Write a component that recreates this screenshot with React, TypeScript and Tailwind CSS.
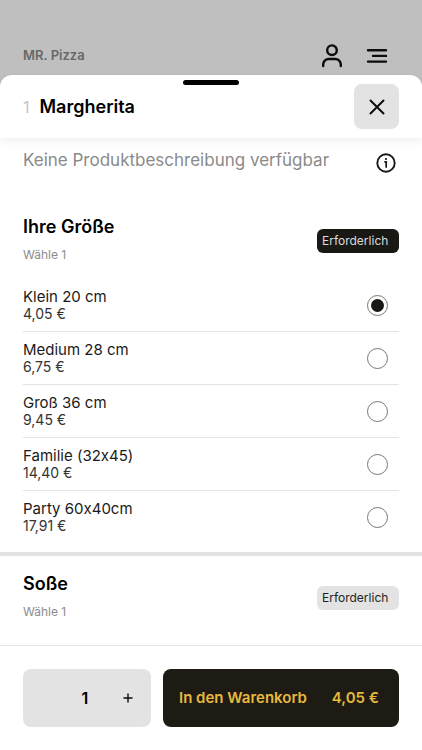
import { useState } from 'react';

const sizes = [
  { name: 'Klein 20 cm', price: '4,05 €' },
  { name: 'Medium 28 cm', price: '6,75 €' },
  { name: 'Groß 36 cm', price: '9,45 €' },
  { name: 'Familie (32x45)', price: '14,40 €' },
  { name: 'Party 60x40cm', price: '17,91 €' },
];

function GroupHeader({ title, active }: { title: string; active?: boolean }) {
  return (
    <div className="flex items-center justify-between">
      <div>
        <h2 className="text-[18px] leading-6 font-semibold text-black">{title}</h2>
        <p className="mt-1 text-[12px] leading-6 text-[#8c8c8c]">Wähle 1</p>
      </div>
      <span
        className={`h-6 w-[82px] rounded-md pl-[5px] text-[12px] leading-6 ${
          active ? 'bg-[#1a1814] text-[#dcdcdc]' : 'bg-[#e3e3e3] text-[#222222]'
        }`}
      >
        Erforderlich
      </span>
    </div>
  );
}

export default function App() {
  const [selected, setSelected] = useState(0);
  const [count, setCount] = useState(1);

  return (
    <div className="flex min-h-screen flex-col bg-[#bfbfbf] font-['Inter',sans-serif] text-[#1a1a1a] [font-feature-settings:'calt'_0]">
      {/* Shop bar behind the sheet */}
      <header className="flex h-[75px] items-end justify-between px-[23px] pb-1">
        <span className="pb-[6px] text-[13px] leading-5 font-semibold text-[#686868]">MR. Pizza</span>
        <div className="flex items-center gap-[22px] pr-[11px]">
          <button type="button" aria-label="Konto">
            <svg width="24" height="28" viewBox="0 0 24 28" fill="none" stroke="#0c0c0c" strokeWidth="2.4" strokeLinecap="round">
              <circle cx="12" cy="7.2" r="4.8" />
              <path d="M3.200 23v-1.500a5.500 5.500 0 0 1 5.500-5.500h6.600a5.500 5.500 0 0 1 5.500 5.500v1.500" />
            </svg>
          </button>
          <button type="button" aria-label="Menü">
            <svg width="22" height="28" viewBox="0 0 22 28" fill="none" stroke="#0c0c0c" strokeWidth="2.4" strokeLinecap="round">
              <path d="M2 7.2h18M7 12.900h13M2 18.600h18" />
            </svg>
          </button>
        </div>
      </header>

      <main className="flex flex-1 flex-col rounded-t-xl bg-white">
        <div className="relative flex items-center justify-between rounded-t-xl px-[23px] py-[9px] shadow-[0_4px_10px_rgba(0,0,0,0.06)]">
          <div className="absolute top-[5px] left-1/2 h-[5px] w-14 -translate-x-1/2 rounded-full bg-black" />
          <h1 className="flex items-center gap-[10px] text-[18px] leading-6 font-semibold text-black">
            <span className="text-[16px] font-normal text-[#c4c4c4]">1</span>
            Margherita
          </h1>
          <button
            type="button"
            aria-label="Schließen"
            className="flex size-[45px] items-center justify-center rounded-lg bg-[#e3e3e3]"
          >
            <svg width="18" height="18" viewBox="0 0 18 18" fill="none" stroke="#0c0c0c" strokeWidth="2" strokeLinecap="round">
              <path d="M2.5 2.5l13 13M15.5 2.5l-13 13" />
            </svg>
          </button>
        </div>

        <div className="flex items-start justify-between px-[23px] pt-[10px]">
          <p className="text-[17px] leading-6 text-[#8a8a8a]">Keine Produktbeschreibung verfügbar</p>
          <button type="button" aria-label="Produktinformationen" className="mt-[5px] mr-[3px]">
            <svg width="20" height="20" viewBox="0 0 20 20" fill="none" stroke="#1a1814" strokeWidth="1.9" strokeLinecap="round">
              <circle cx="10" cy="10" r="8.7" />
              <path d="M9 8.9h1.200v5.200" strokeWidth="1.700" />
              <circle cx="10" cy="6" r="1.1" fill="#1a1814" stroke="none" />
            </svg>
          </button>
        </div>

        <section className="border-b-4 border-[#e3e3e3] px-[23px] pt-[42px] pb-[9px]">
          <GroupHeader title="Ihre Größe" active />
          <div className="mt-3">
            {sizes.map((size, i) => (
              <label
                key={size.name}
                className="flex items-center justify-between border-b border-[#e3e3e3] py-[9px] last:border-b-0"
              >
                <span>
                  <span className="block text-[15px] leading-[18px]">{size.name}</span>
                  <span className="block text-[14px] leading-4 text-[#333333]">{size.price}</span>
                </span>
                <input
                  type="radio"
                  name="size"
                  checked={selected === i}
                  onChange={() => setSelected(i)}
                  className="mr-[11px] flex size-[21px] appearance-none items-center justify-center rounded-full border border-[#777777] before:size-[13px] before:rounded-full checked:before:bg-[#1a1814]"
                />
              </label>
            ))}
          </div>
        </section>

        <section className="px-[23px] pt-4 pb-4">
          <GroupHeader title="Soße" />
        </section>

        <footer className="mt-auto flex gap-3 border-t border-[#e3e3e3] px-[23px] py-[23px]">
          <div className="grid h-[58px] w-32 shrink-0 grid-cols-3 items-center rounded-lg bg-[#e3e3e3] pr-1">
            <span className="col-start-2 text-center text-[16px] font-semibold text-black">{count}</span>
            <button
              type="button"
              aria-label="Menge erhöhen"
              onClick={() => setCount(count + 1)}
              className="flex h-full items-center justify-center pl-1"
            >
              <svg width="10" height="10" viewBox="0 0 10 10" stroke="#0c0c0c" strokeWidth="1.4">
                <path d="M5 .5v9M.5 5h9" />
              </svg>
            </button>
          </div>
          <button
            type="button"
            className="flex h-[58px] flex-1 items-center justify-between rounded-lg bg-[#1e1b14] pr-5 pl-4 text-[15px] font-semibold text-[#e6b93c]"
          >
            <span>In den Warenkorb</span>
            <span>4,05 €</span>
          </button>
        </footer>
      </main>
    </div>
  );
}
